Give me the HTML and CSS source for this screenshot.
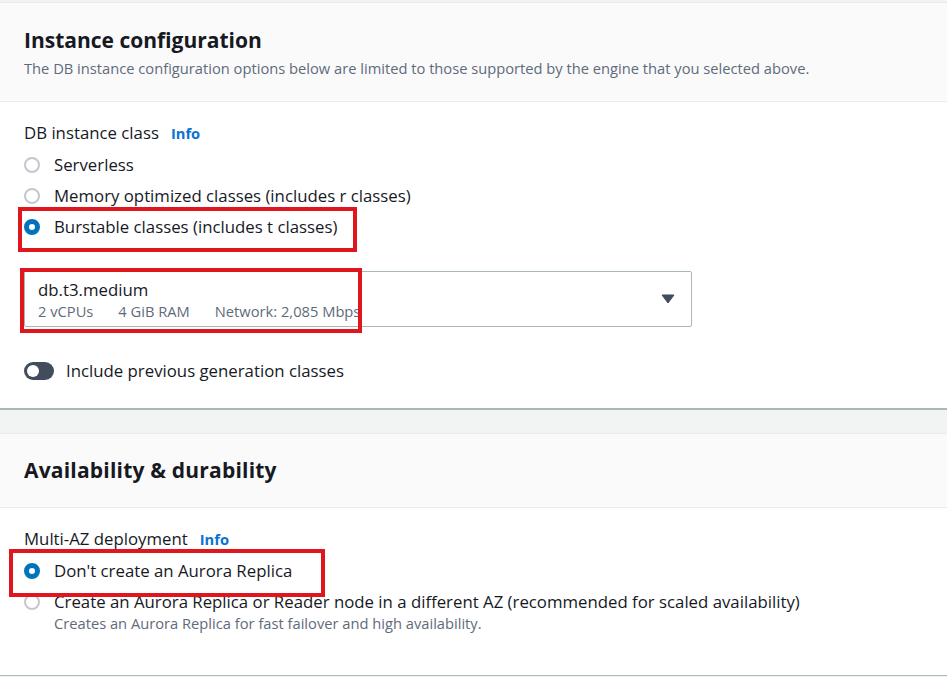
FILE: index.html
```html
<!DOCTYPE html>
<html>
<head>
<meta charset="utf-8">
<link rel="stylesheet" href="styles.css">
</head>
<body>
<div class="page">
  <section class="container first">
    <header class="c-head">
      <h2 class="c-title">Instance configuration</h2>
      <p class="c-desc">The DB instance configuration options below are limited to those supported by the engine that you selected above.</p>
    </header>
    <div class="c-body">
      <div class="label">DB instance class <span class="info">Info</span></div>
      <div class="radios">
        <div class="radio"><span class="dot"></span><span class="rtext">Serverless</span></div>
        <div class="radio"><span class="dot"></span><span class="rtext">Memory optimized classes (includes r classes)</span></div>
        <div class="radio"><span class="dot on"></span><span class="rtext">Burstable classes (includes t classes)</span></div>
      </div>
      <div class="select">
        <div class="sel-main">
          <div class="sel-val">db.t3.medium</div>
          <div class="sel-tags"><span>2 vCPUs</span><span>4 GiB RAM</span><span>Network: 2,085 Mbps</span></div>
        </div>
        <svg class="caret" width="14" height="10" viewBox="0 0 14 10"><path d="M1 1 H13 L7 9 Z" fill="#414d5c" stroke="#414d5c" stroke-width="1" stroke-linejoin="round"/></svg>
      </div>
      <div class="toggle-row"><span class="toggle"><span class="knob"></span></span><span class="ttext">Include previous generation classes</span></div>
    </div>
  </section>
  <section class="container second">
    <header class="c-head">
      <h2 class="c-title">Availability &amp; durability</h2>
    </header>
    <div class="c-body">
      <div class="label">Multi-AZ deployment <span class="info">Info</span></div>
      <div class="radios">
        <div class="radio"><span class="dot on"></span><span class="rtext">Don't create an Aurora Replica</span></div>
        <div class="radio"><span class="dot"></span><span class="rtext">Create an Aurora Replica or Reader node in a different AZ (recommended for scaled availability)</span></div>
        <div class="rdesc">Creates an Aurora Replica for fast failover and high availability.</div>
      </div>
    </div>
  </section>
  <div class="mark m1"></div>
  <div class="mark m2"></div>
  <div class="mark m3"></div>
</div>
</body>
</html>
```
FILE: styles.css
```css
* { box-sizing: border-box; }
html, body { margin: 0; padding: 0; }
body {
  background: #f2f3f3;
  font-family: "Open Sans", "Noto Sans", sans-serif;
  color: #16191f;
  width: 947px;
  height: 677px;
  overflow: hidden;
}
.page {
  position: relative;
  padding-top: 2px;
}
.container {
  background: #ffffff;
  border-top: 1px solid #e9ebed;
}
.container.first {
  border-bottom: 2px solid #aab7b8;
}
.container.second {
  margin-top: 23px;
  border-bottom: 1px solid #aab7b8;
}
.c-head {
  background: #fafafa;
  border-bottom: 1px solid #eaeded;
  padding: 25px 24px 23px;
}
.second .c-head { padding: 24px 24px 25px; }
.c-title {
  margin: 0;
  font-size: 21px;
  line-height: 24px;
  font-weight: 700;
  color: #16191f;
}
.second .c-title { letter-spacing: 0.2px; }
.c-desc {
  margin: 6px 0 0;
  font-size: 14.7px;
  line-height: 20px;
  color: #5f6b7a;
}
.c-body {
  padding: 20px 24px 26px;
}
.second .c-body { padding: 20px 24px 43px; }
.label {
  font-size: 16.8px;
  line-height: 22px;
  display: flex;
  align-items: baseline;
  gap: 12px;
}
.info {
  font-size: 14.7px;
  font-weight: 700;
  color: #0972d3;
}
.radios {
  display: flex;
  flex-direction: column;
  margin-top: 5px;
}
.radio {
  display: flex;
  align-items: center;
  gap: 14px;
  height: 31px;
  font-size: 16.8px;
}
.dot {
  width: 16px;
  height: 16px;
  border-radius: 50%;
  border: 2px solid #c2c8d0;
  background: #fff;
  flex: none;
}
.dot.on {
  border: 5px solid #0073bb;
}
.rdesc {
  margin: -3px 0 0 30px;
  font-size: 14.7px;
  line-height: 18px;
  color: #5f6b7a;
}
.select {
  margin-top: 29px;
  width: 668px;
  height: 56px;
  border: 1px solid #aab7b8;
  border-radius: 2px;
  background: #fff;
  display: flex;
  align-items: center;
  justify-content: space-between;
  padding: 2px 16px 0 13px;
}
.sel-val {
  font-size: 16.8px;
  line-height: 22px;
}
.sel-tags {
  display: flex;
  gap: 25px;
  font-size: 14.7px;
  line-height: 20px;
  color: #5f6b7a;
}
.caret { margin-top: -3px; }
.toggle-row {
  margin-top: 33px;
  display: flex;
  align-items: center;
  gap: 12px;
  font-size: 16.8px;
  line-height: 22px;
}
.toggle {
  width: 30px;
  height: 18px;
  border-radius: 9px;
  background: #414d5c;
  position: relative;
  flex: none;
}
.knob {
  position: absolute;
  left: 3px;
  top: 3px;
  width: 12px;
  height: 12px;
  border-radius: 50%;
  background: #fff;
}
.mark {
  position: absolute;
  border: 4px solid #e0161f;
}
.m1 { left: 18px; top: 207px; width: 339px; height: 45px; }
.m2 { left: 20px; top: 268px; width: 342px; height: 65px; }
.m3 { left: 9px; top: 549px; width: 316px; height: 48px; }
```
